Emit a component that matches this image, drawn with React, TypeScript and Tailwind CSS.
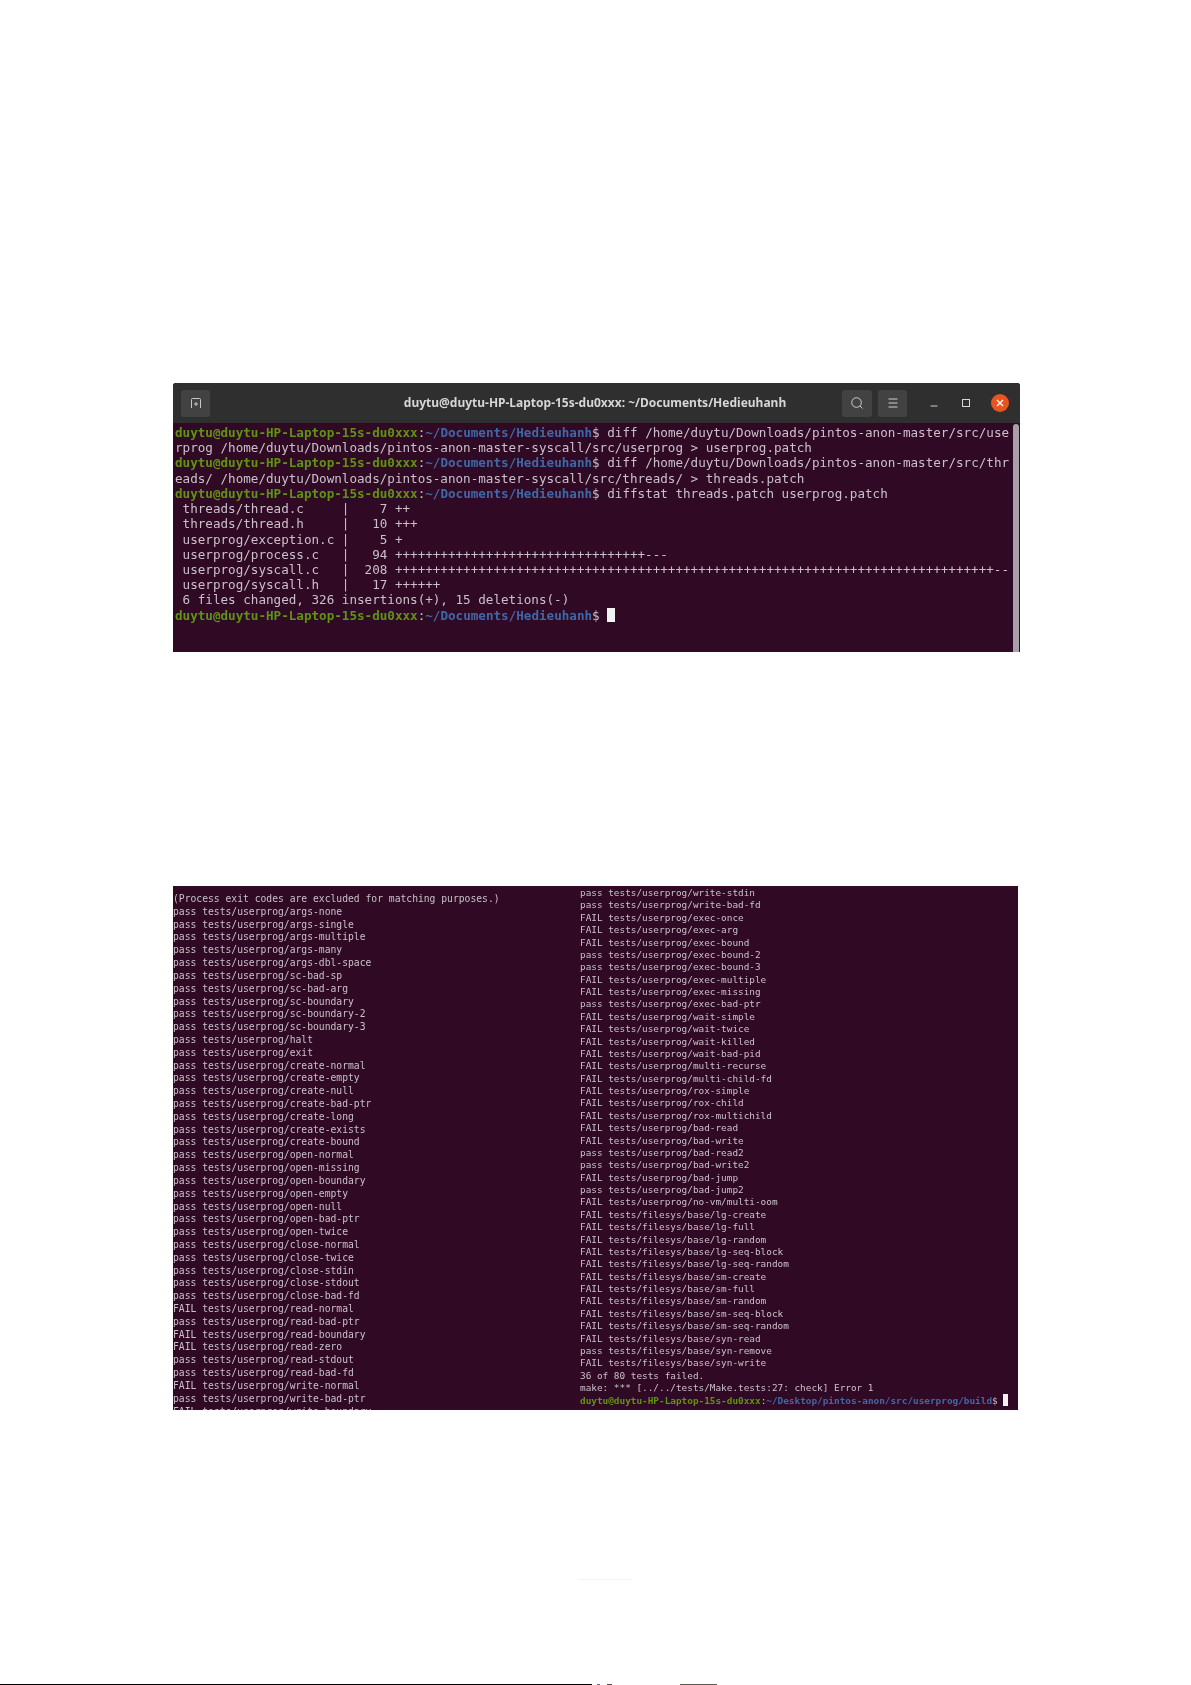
const P1 = "duytu@duytu-HP-Laptop-15s-du0xxx";
const P2 = "~/Documents/Hedieuhanh";

const leftLines = [
  "(Process exit codes are excluded for matching purposes.)",
  "pass tests/userprog/args-none",
  "pass tests/userprog/args-single",
  "pass tests/userprog/args-multiple",
  "pass tests/userprog/args-many",
  "pass tests/userprog/args-dbl-space",
  "pass tests/userprog/sc-bad-sp",
  "pass tests/userprog/sc-bad-arg",
  "pass tests/userprog/sc-boundary",
  "pass tests/userprog/sc-boundary-2",
  "pass tests/userprog/sc-boundary-3",
  "pass tests/userprog/halt",
  "pass tests/userprog/exit",
  "pass tests/userprog/create-normal",
  "pass tests/userprog/create-empty",
  "pass tests/userprog/create-null",
  "pass tests/userprog/create-bad-ptr",
  "pass tests/userprog/create-long",
  "pass tests/userprog/create-exists",
  "pass tests/userprog/create-bound",
  "pass tests/userprog/open-normal",
  "pass tests/userprog/open-missing",
  "pass tests/userprog/open-boundary",
  "pass tests/userprog/open-empty",
  "pass tests/userprog/open-null",
  "pass tests/userprog/open-bad-ptr",
  "pass tests/userprog/open-twice",
  "pass tests/userprog/close-normal",
  "pass tests/userprog/close-twice",
  "pass tests/userprog/close-stdin",
  "pass tests/userprog/close-stdout",
  "pass tests/userprog/close-bad-fd",
  "FAIL tests/userprog/read-normal",
  "pass tests/userprog/read-bad-ptr",
  "FAIL tests/userprog/read-boundary",
  "FAIL tests/userprog/read-zero",
  "pass tests/userprog/read-stdout",
  "pass tests/userprog/read-bad-fd",
  "FAIL tests/userprog/write-normal",
  "pass tests/userprog/write-bad-ptr",
  "FAIL tests/userprog/write-boundary",
];

const rightLines = [
  "pass tests/userprog/write-stdin",
  "pass tests/userprog/write-bad-fd",
  "FAIL tests/userprog/exec-once",
  "FAIL tests/userprog/exec-arg",
  "FAIL tests/userprog/exec-bound",
  "pass tests/userprog/exec-bound-2",
  "pass tests/userprog/exec-bound-3",
  "FAIL tests/userprog/exec-multiple",
  "FAIL tests/userprog/exec-missing",
  "pass tests/userprog/exec-bad-ptr",
  "FAIL tests/userprog/wait-simple",
  "FAIL tests/userprog/wait-twice",
  "FAIL tests/userprog/wait-killed",
  "FAIL tests/userprog/wait-bad-pid",
  "FAIL tests/userprog/multi-recurse",
  "FAIL tests/userprog/multi-child-fd",
  "FAIL tests/userprog/rox-simple",
  "FAIL tests/userprog/rox-child",
  "FAIL tests/userprog/rox-multichild",
  "FAIL tests/userprog/bad-read",
  "FAIL tests/userprog/bad-write",
  "pass tests/userprog/bad-read2",
  "pass tests/userprog/bad-write2",
  "FAIL tests/userprog/bad-jump",
  "pass tests/userprog/bad-jump2",
  "FAIL tests/userprog/no-vm/multi-oom",
  "FAIL tests/filesys/base/lg-create",
  "FAIL tests/filesys/base/lg-full",
  "FAIL tests/filesys/base/lg-random",
  "FAIL tests/filesys/base/lg-seq-block",
  "FAIL tests/filesys/base/lg-seq-random",
  "FAIL tests/filesys/base/sm-create",
  "FAIL tests/filesys/base/sm-full",
  "FAIL tests/filesys/base/sm-random",
  "FAIL tests/filesys/base/sm-seq-block",
  "FAIL tests/filesys/base/sm-seq-random",
  "FAIL tests/filesys/base/syn-read",
  "pass tests/filesys/base/syn-remove",
  "FAIL tests/filesys/base/syn-write",
  "36 of 80 tests failed.",
  "make: *** [../../tests/Make.tests:27: check] Error 1",
];

const plus = (n: number) => "+".repeat(n);

function Prompt({ path }: { path: string }) {
  return (
    <>
      <span className="text-[#5f9412] font-semibold">{P1}</span>
      <span className="text-[#c9c0c9]">:</span>
      <span className="text-[#3f68a6] font-semibold">{path}</span>
      <span className="text-[#c9c0c9]">$ </span>
    </>
  );
}

function HeaderButton({ children, wide }: { children: React.ReactNode; wide?: boolean }) {
  return (
    <div className={`flex h-[27px] items-center justify-center rounded-[3px] bg-[#424242] ${wide ? "w-[30px]" : "w-[29px]"}`}>
      {children}
    </div>
  );
}

export default function App() {
  return (
    <div className="relative h-[1685px] w-[1191px] overflow-hidden bg-white font-['DejaVu_Sans_Mono',monospace]">
      <div className="pl-[173px] pr-[171px] pt-[383px]">
        <section className="h-[269px] overflow-hidden rounded-t-[3px] bg-[#300a24]">
          <header className="grid h-[40px] grid-cols-[1fr_auto_1fr] items-center bg-[#2f2f2f] pl-[8px] pr-[11px]">
            <div className="flex">
              <HeaderButton>
                <svg width="14" height="14" viewBox="0 0 14 14" fill="none" stroke="#c8c8c8" strokeWidth="1">
                  <path d="M2.5 12V3.5a1 1 0 0 1 1-1h7a1 1 0 0 1 1 1V12" />
                  <path d="M7 6v4M5 8h4" />
                </svg>
              </HeaderButton>
            </div>
            <div className="font-['Noto_Sans',sans-serif] text-[12px] font-bold text-[#d6d6d6] blur-[0.4px]">
              duytu@duytu-HP-Laptop-15s-du0xxx: ~/Documents/Hedieuhanh
            </div>
            <div className="flex items-center justify-end">
              <HeaderButton wide>
                <svg width="14" height="14" viewBox="0 0 14 14" fill="none" stroke="#d0d0d0" strokeWidth="1">
                  <circle cx="6.5" cy="6.5" r="4.8" />
                  <path d="M10 10l2.5 2.5" />
                </svg>
              </HeaderButton>
              <div className="ml-[6px]">
                <HeaderButton>
                  <svg width="12" height="12" viewBox="0 0 12 12" stroke="#d0d0d0" strokeWidth="1">
                    <path d="M1.5 2h9M1.5 6h9M1.5 10h9" />
                  </svg>
                </HeaderButton>
              </div>
              <svg className="ml-[22px]" width="10" height="10" viewBox="0 0 10 10" stroke="#cfcfcf" strokeWidth="1">
                <path d="M1.5 8h7" />
              </svg>
              <svg className="ml-[22px]" width="10" height="10" viewBox="0 0 10 10" fill="none" stroke="#d8d8d8" strokeWidth="1">
                <rect x="1.5" y="1.5" width="7" height="7" />
              </svg>
              <div className="ml-[20px] flex h-[18px] w-[18px] items-center justify-center rounded-full bg-[#e9541f]">
                <svg width="8" height="8" viewBox="0 0 8 8" stroke="#ffffff" strokeWidth="1.4">
                  <path d="M1 1l6 6M7 1L1 7" />
                </svg>
              </div>
            </div>
          </header>
          <div className="flex h-[229px] bg-[#300a24]">
            <pre className="flex-1 overflow-hidden pl-[2px] pt-[2px] font-['DejaVu_Sans_Mono',monospace] text-[12.6px] leading-[15.22px] text-[#c9c0c9] blur-[0.5px]">
              <Prompt path={P2} />
              {"diff /home/duytu/Downloads/pintos-anon-master/src/use\n"}
              {"rprog /home/duytu/Downloads/pintos-anon-master-syscall/src/userprog > userprog.patch\n"}
              <Prompt path={P2} />
              {"diff /home/duytu/Downloads/pintos-anon-master/src/thr\n"}
              {"eads/ /home/duytu/Downloads/pintos-anon-master-syscall/src/threads/ > threads.patch\n"}
              <Prompt path={P2} />
              {"diffstat threads.patch userprog.patch\n"}
              {` threads/thread.c     |    7 ${plus(2)}\n`}
              {` threads/thread.h     |   10 ${plus(3)}\n`}
              {` userprog/exception.c |    5 ${plus(1)}\n`}
              {` userprog/process.c   |   94 ${plus(33)}---\n`}
              {` userprog/syscall.c   |  208 ${plus(79)}--\n`}
              {` userprog/syscall.h   |   17 ${plus(6)}\n`}
              {" 6 files changed, 326 insertions(+), 15 deletions(-)\n"}
              <Prompt path={P2} />
              <span className="inline-block h-[14px] w-[8px] bg-[#f2f2f2] align-[-2px]" />
            </pre>
            <div className="mr-[1px] mt-[1px] w-[6px] rounded-t-[3px] bg-[#a8a0a6]" />
          </div>
        </section>
      </div>

      <section className="ml-[173px] mt-[234px] flex h-[524px] w-[845px] overflow-hidden bg-[#300a24] blur-[0.5px]">
        <pre className="w-[407px] shrink-0 overflow-hidden pt-[7px] font-['DejaVu_Sans_Mono',monospace] text-[9.7px] leading-[12.81px] text-[#c9c0c9]">
          {leftLines.join("\n")}
        </pre>
        <pre className="flex-1 overflow-hidden pt-[1px] font-['DejaVu_Sans_Mono',monospace] text-[9.4px] leading-[12.38px] text-[#c9c0c9]">
          {rightLines.join("\n") + "\n"}
          <span className="text-[#5f9412] font-semibold">{P1}</span>
          <span>:</span>
          <span className="text-[#3f68a6] font-semibold">~/Desktop/pintos-anon/src/userprog/build</span>
          <span>$ </span>
          <span className="inline-block h-[12px] w-[5px] bg-[#f2f2f2] align-[-2px]" />
        </pre>
      </section>

      <div className="absolute left-[578px] top-[1579px] h-px w-[54px] bg-[#f4f3ec]" />
      <div className="absolute bottom-0 left-0 h-px w-[592px] bg-black" />
      <div className="absolute bottom-0 left-[597px] h-px w-[3px] bg-[#4a7a8a]" />
      <div className="absolute bottom-0 left-[607px] h-px w-[5px] bg-[#5a4a4a]" />
      <div className="absolute bottom-0 left-[680px] h-px w-[37px] bg-[#5a5a50]" />
    </div>
  );
}
